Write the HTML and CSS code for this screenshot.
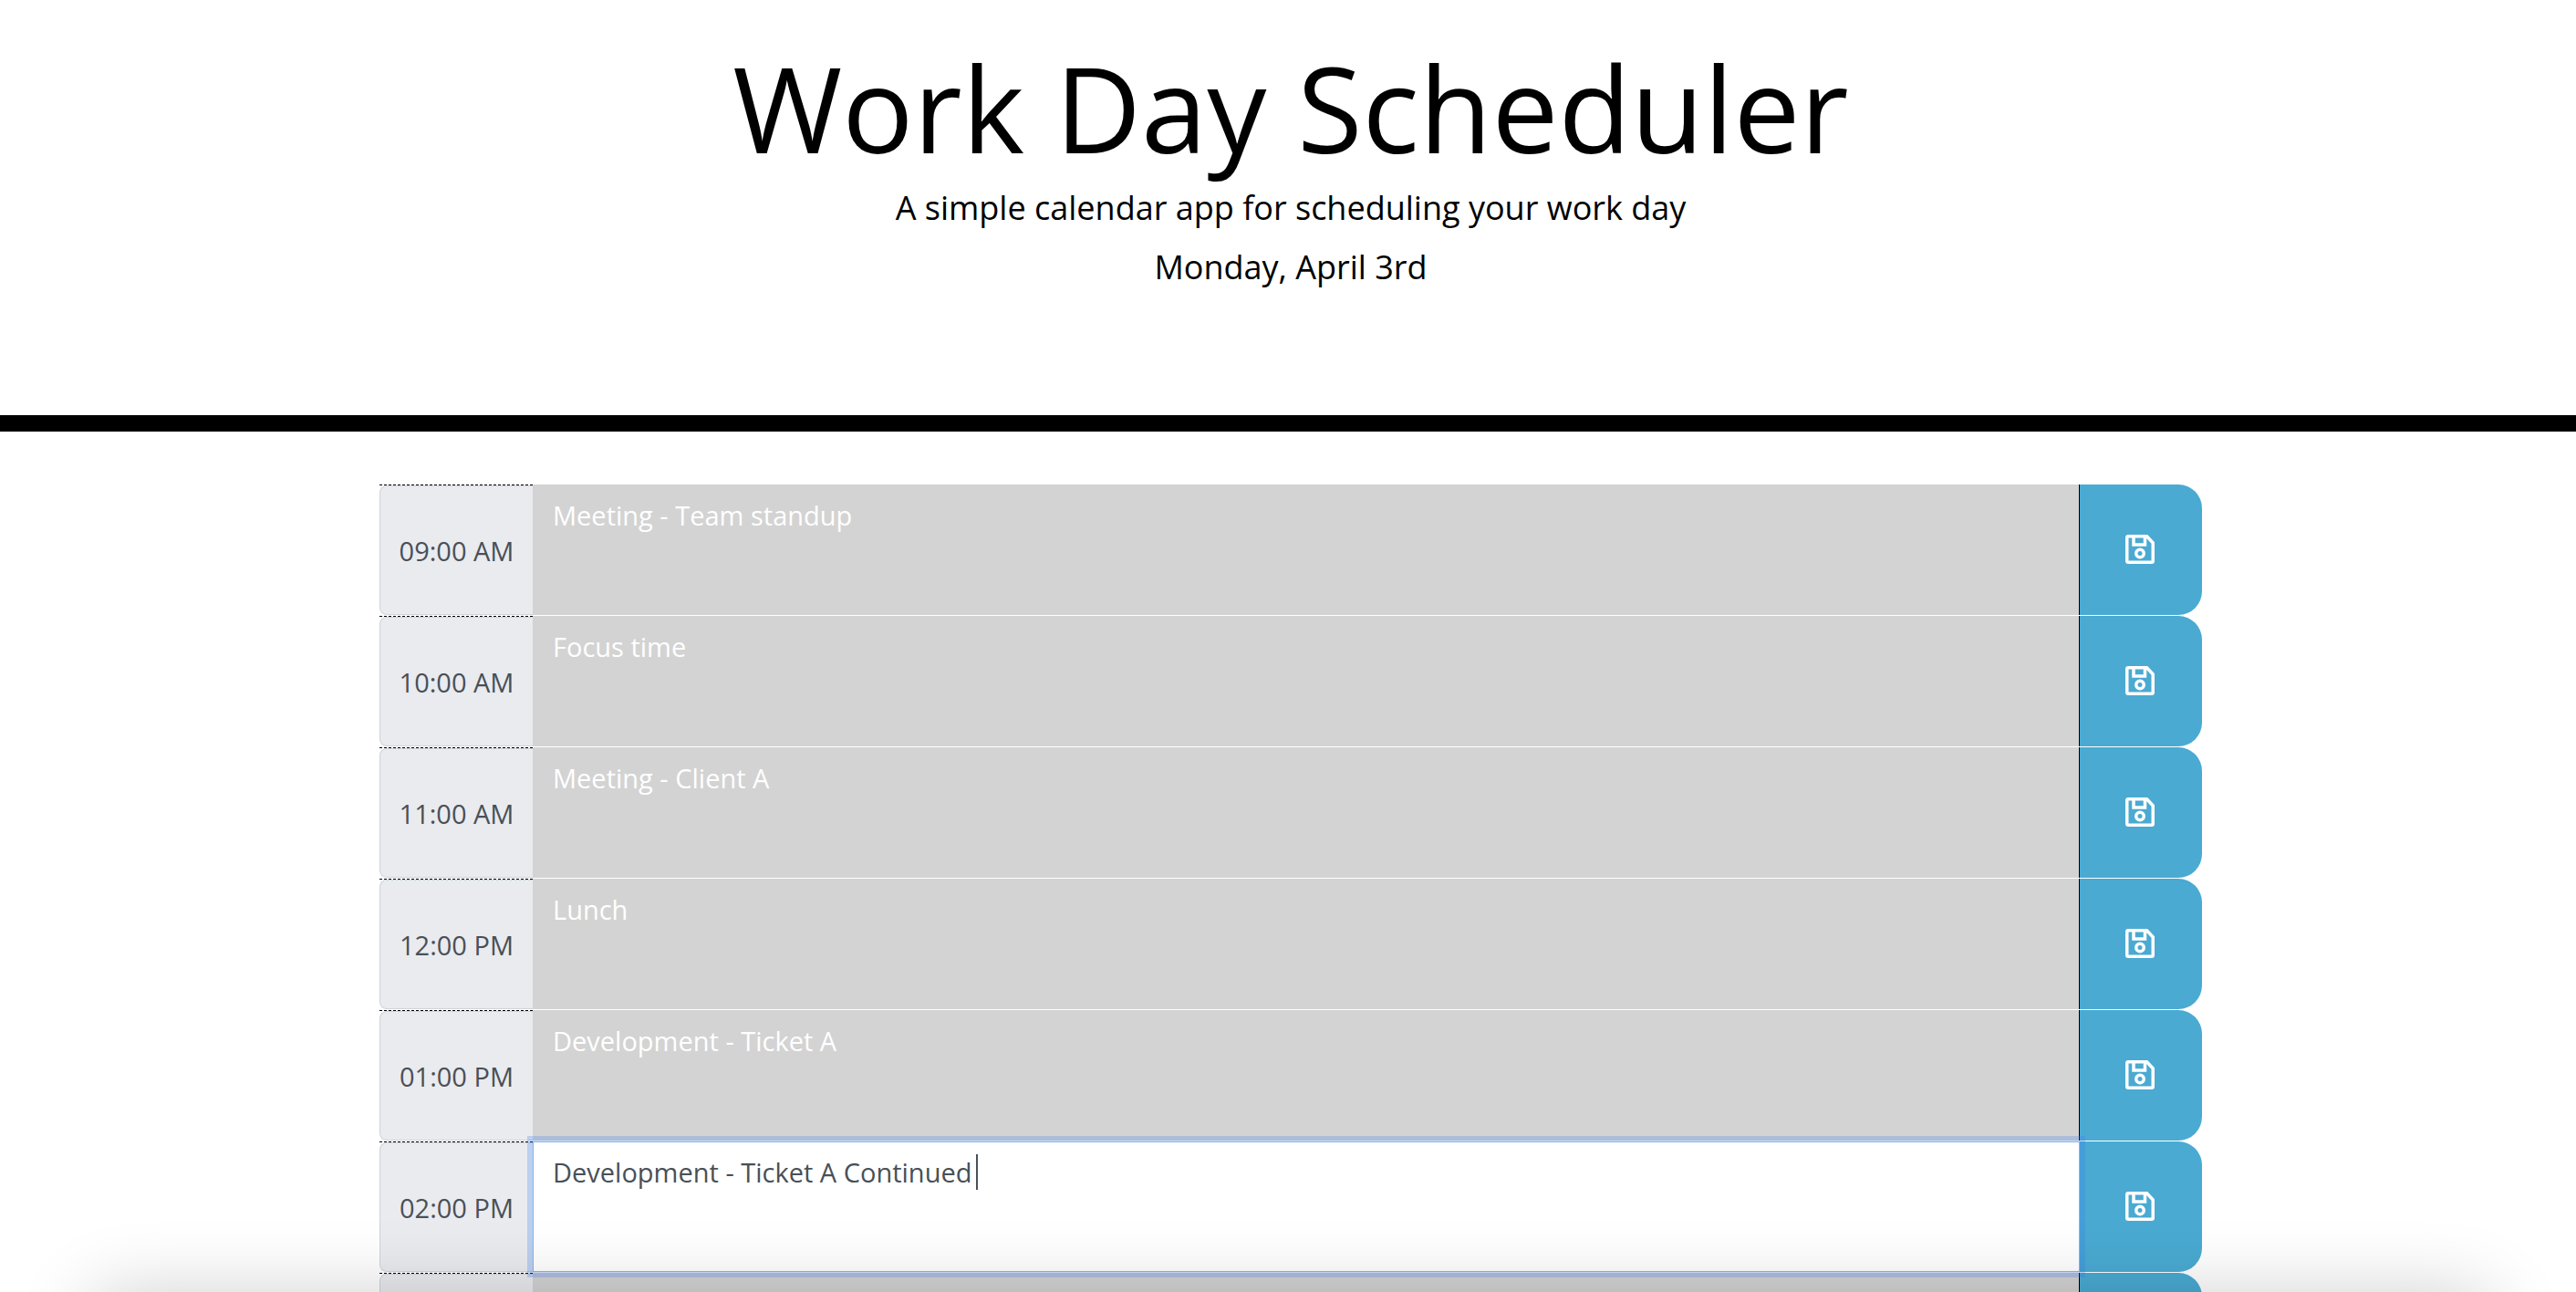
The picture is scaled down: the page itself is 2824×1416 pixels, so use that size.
FILE: index.html
```html
<!DOCTYPE html>
<html lang="en">
<head>
<meta charset="utf-8">
<meta name="viewport" content="width=device-width, initial-scale=1">
<title>Work Day Scheduler</title>
<link rel="stylesheet" href="styles.css">
</head>
<body>
<svg class="sprite" aria-hidden="true">
  <symbol id="save" viewBox="0 0 32 32">
    <path d="M3.250 1.750H23.500L30.250 9V28.750Q30.250 30.250 28.750 30.250H3.250Q1.750 30.250 1.750 28.750V3.250Q1.750 1.750 3.250 1.750ZM9 2V11H21.500V2"/>
    <circle cx="16" cy="20.500" r="4.250"/>
  </symbol>
</svg>
<header class="page-header">
  <h1 class="title">Work Day Scheduler</h1>
  <p class="lead">A simple calendar app for scheduling your work day</p>
  <p class="lead">Monday, April 3rd</p>
</header>
<main class="schedule">
  <form class="row">
    <label class="hour" for="h9"><span class="hour-box">09:00 AM</span></label>
    <textarea class="entry" id="h9">Meeting - Team standup</textarea>
    <button class="save" type="button" aria-label="Save"><svg class="icon"><use href="#save"/></svg></button>
  </form>
  <form class="row">
    <label class="hour" for="h10"><span class="hour-box">10:00 AM</span></label>
    <textarea class="entry" id="h10">Focus time</textarea>
    <button class="save" type="button" aria-label="Save"><svg class="icon"><use href="#save"/></svg></button>
  </form>
  <form class="row">
    <label class="hour" for="h11"><span class="hour-box">11:00 AM</span></label>
    <textarea class="entry" id="h11">Meeting - Client A</textarea>
    <button class="save" type="button" aria-label="Save"><svg class="icon"><use href="#save"/></svg></button>
  </form>
  <form class="row">
    <label class="hour" for="h12"><span class="hour-box">12:00 PM</span></label>
    <textarea class="entry" id="h12">Lunch</textarea>
    <button class="save" type="button" aria-label="Save"><svg class="icon"><use href="#save"/></svg></button>
  </form>
  <form class="row">
    <label class="hour" for="h13"><span class="hour-box">01:00 PM</span></label>
    <textarea class="entry" id="h13">Development - Ticket A</textarea>
    <button class="save" type="button" aria-label="Save"><svg class="icon"><use href="#save"/></svg></button>
  </form>
  <form class="row">
    <label class="hour" for="h14"><span class="hour-box">02:00 PM</span></label>
    <div class="entry-wrap">
      <textarea class="entry entry-active" id="h14">Development - Ticket A Continued</textarea>
      <span class="caret"></span>
    </div>
    <button class="save" type="button" aria-label="Save"><svg class="icon"><use href="#save"/></svg></button>
  </form>
  <form class="row">
    <label class="hour" for="h15"><span class="hour-box"></span></label>
    <textarea class="entry" id="h15"></textarea>
    <button class="save" type="button" aria-label="Save"><svg class="icon"><use href="#save"/></svg></button>
  </form>
</main>
<div class="bottom-shade"></div>
</body>
</html>
```

FILE: styles.css
```css
* { box-sizing: border-box; }

body {
  margin: 0;
  height: 100vh;
  overflow: hidden;
  background: #fff;
  color: #000;
  font-family: "Open Sans", sans-serif;
  font-size: 29px;
  line-height: 44px;
}

.sprite { display: none; }

.page-header {
  padding: 40px 0 125px 6px;
  border-bottom: 18px solid #000;
  text-align: center;
}

.title {
  margin: 0 0 4px;
  font-size: 130px;
  font-weight: 400;
  line-height: 156px;
}

.lead {
  margin: 0 0 10px;
  font-size: 36px;
  line-height: 55px;
}

.schedule {
  max-width: 2004px;
  margin: 58px auto 0;
  padding-left: 6px;
}

.row {
  display: grid;
  grid-template-columns: 168px 1fr 135px;
  height: 144px;
  margin: 0;
}

.hour {
  display: flex;
  border-top: 1px dashed #000;
}

.hour-box {
  flex: 1;
  display: flex;
  align-items: center;
  justify-content: center;
  margin-bottom: 1px;
  padding-top: 2px;
  border: 1px solid #ced4da;
  border-right: 0;
  border-radius: 8px 0 0 8px;
  background: #e9ebef;
  color: #495057;
}

.entry {
  display: block;
  width: 100%;
  height: 143px;
  margin: 0;
  padding: 12px 22px;
  border: 0;
  outline: 0;
  resize: none;
  background: #d3d3d3;
  color: #fff;
  font: inherit;
}

/* The focused entry covers the divider of its save button. */
.entry-wrap {
  position: relative;
  z-index: 1;
  margin-right: -1px;
}

.entry-active {
  border: 1px solid #80b4f8;
  padding: 11px 21px;
  background: #fff;
  color: #495057;
  box-shadow: 0 0 0 6px rgba(55, 123, 240, 0.25);
}

.caret {
  position: absolute;
  left: 486px;
  top: 14px;
  width: 2px;
  height: 39px;
  background: #495057;
}

.save {
  display: flex;
  align-items: center;
  justify-content: center;
  height: 143px;
  padding: 0 2px 2px 0;
  border: 0;
  border-left: 1px solid #000;
  border-radius: 0 26px 26px 0;
  background: #4aaad2;
  color: #fff;
}

.icon {
  width: 32px;
  height: 32px;
  fill: none;
  stroke: currentColor;
  stroke-width: 3.5;
}

.bottom-shade {
  position: fixed;
  left: 100px;
  right: 94px;
  top: 100%;
  height: 200px;
  z-index: 2;
  border-radius: 20px;
  box-shadow: 0 4px 84px rgba(0, 0, 0, 0.2);
  pointer-events: none;
}
```
